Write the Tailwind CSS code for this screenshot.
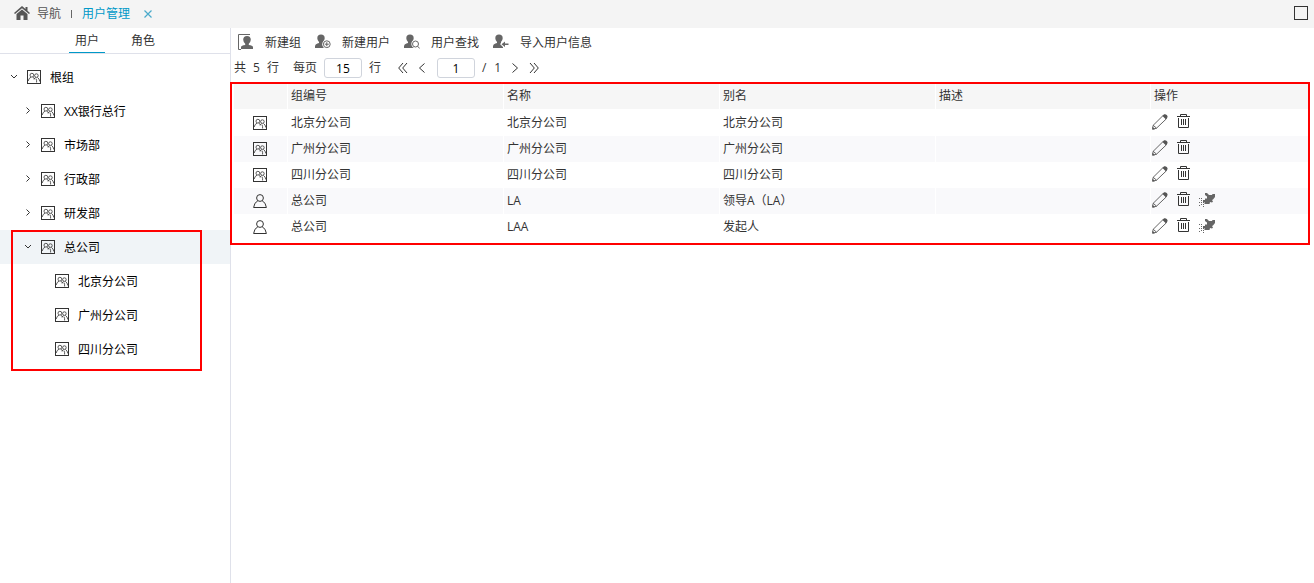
<!doctype html>
<html lang="zh-CN">

<head>
    <meta charset="UTF-8">
    <meta name="viewport" content="width=device-width, initial-scale=1.0">
    <title>用户管理</title>
    <script src="https://cdn.jsdelivr.net/npm/@tailwindcss/browser@4"></script>
</head>

<body class="flex min-h-screen flex-col bg-white font-['Open_Sans','Noto_Sans_CJK_SC',sans-serif] text-xs text-[#333]">

    <!-- Shared icons -->
    <svg class="hidden" xmlns="http://www.w3.org/2000/svg">
        <symbol id="group" viewBox="0 0 14 14">
            <rect x="0.5" y="0.5" width="13" height="13" fill="none" stroke="currentColor" />
            <g fill="none" stroke="currentColor" stroke-width="0.8">
                <circle cx="4.9" cy="5.2" r="1.9" />
                <circle cx="9.4" cy="5.6" r="1.8" />
                <path d="M1.2 11Q1.8 8 4 7.2M5.8 7.2Q7.2 7.8 7.6 9.2M7 9.4L8.4 7.4M10.4 7.4Q12.4 8.6 12.8 11.5M9 8.6Q9.8 10 9.6 12.5" />
            </g>
        </symbol>
        <symbol id="person" viewBox="0 0 14 14">
            <g fill="none" stroke="currentColor">
                <circle cx="7" cy="4" r="3.4" />
                <path d="M4.8 6.8Q1.2 8.5 0.6 13.5H13.4Q12.8 8.5 9.2 6.8" />
            </g>
        </symbol>
        <symbol id="down" viewBox="0 0 8 8">
            <path d="M1 2L4 5L7 2" fill="none" stroke="currentColor" />
        </symbol>
        <symbol id="right" viewBox="0 0 8 8">
            <path d="M2.5 0.5L5.5 3.5L2.5 6.5" fill="none" stroke="currentColor" />
        </symbol>
        <symbol id="bust" viewBox="0 0 16 16">
            <path d="M6 0.5A3.7 3.7 0 0 1 9.7 4.2Q9.6 6.6 8 8V9.2Q9.5 9.5 10 10V14H0V12Q0.2 10 2.4 9.5L4 9V8Q2.4 6.6 2.3 4.2A3.7 3.7 0 0 1 6 0.5Z" fill="currentColor" />
        </symbol>
        <symbol id="pencil" viewBox="0 0 16 16">
            <path d="M1 11.5L11.2 1.4L14.6 4.6L4.4 14.3L0.8 15ZM1.2 11.3L4.6 14.2" fill="none" stroke="currentColor" stroke-width="0.9" />
            <path d="M10.5 2L12.2 0.3Q13.8 0 15 1.2Q16 2.6 15.4 3.6L13.8 5.3ZM0.4 12.8L3 15.2L0.3 15.7Z" fill="currentColor" />
        </symbol>
        <symbol id="trash" viewBox="0 0 13 15">
            <path d="M0 2.5H13M3.5 2.5V0.5H9.5V2.5M1.5 4V13.5H11.5V4M4.5 5V11M6.5 5V11M8.5 5V11" fill="none" stroke="currentColor" />
        </symbol>
        <symbol id="rocket" viewBox="0 0 16 14">
            <path d="M6 0H8L10 2H13L13.5 1H16V4L14 6.5L13 7L14 8.5L13 9.5L11 9L10.5 11H5.5V9H4V7H6V5.5H8V3.5L6 2Z" fill="currentColor" />
            <path d="M0 5.5H3M2 7.5H4M0 9.5H5M2 11.5H5M0 12.5H1M4 13.5H5" fill="none" stroke="currentColor" stroke-dasharray="1 1" />
        </symbol>
    </svg>

    <!-- Top bar -->
    <header class="flex h-7 items-center bg-[#f4f4f4] pr-1.5 pl-3.5 text-[#555]">
        <a href="#" class="flex items-center gap-[7px]">
            <svg class="mb-0.5 h-4 w-4" viewBox="0 0 16 16" fill="currentColor" aria-hidden="true">
                <path d="M8 1L0 8L1 9L8 3.2L15 9L16 8L13.5 5.8V2H11.5V4Z" />
                <path d="M8 4.4L2.5 9V15H6.5V10.5H9.5V15H13.5V9Z" />
            </svg>
            导航
        </a>
        <span class="ml-2.5 h-2 w-px bg-[#666]"></span>
        <a href="#" class="ml-2.5 text-[#0099c8]">用户管理</a>
        <button type="button" aria-label="关闭" class="ml-3.5 text-[#4aaacb]">
            <svg class="h-2 w-2" viewBox="0 0 8 8" fill="none" stroke="currentColor" stroke-width="1.2">
                <path d="M0.5 0.5L7.5 7.5M7.5 0.5L0.5 7.5" />
            </svg>
        </button>
        <button type="button" aria-label="最大化" class="mb-0.5 ml-auto h-3.5 w-3.5 border border-[#333]"></button>
    </header>

    <div class="flex flex-1">
        <!-- Sidebar -->
        <aside class="w-[231px] shrink-0 border-r border-[#dfe1ea]">
            <div class="flex h-[26px] gap-3.5 border-b border-[#dfe1ea] pl-[69px]">
                <button type="button" class="h-[25px] border-b border-[#0099c8] px-1.5 pt-0.5">用户</button>
                <button type="button" class="h-[25px] border-b border-transparent px-3 pt-0.5">角色</button>
            </div>

            <ul class="pt-1.5 text-black">
                <li>
                    <div class="flex h-[34px] items-center gap-[9px] pl-2.5">
                        <svg class="h-2 w-2 text-[#333]"><use href="#down" /></svg>
                        <svg class="h-3.5 w-3.5 text-[#333]"><use href="#group" /></svg>
                        <span class="pt-0.5">根组</span>
                    </div>
                    <ul>
                        <li class="flex h-[34px] items-center gap-[9px] pl-6">
                            <svg class="h-2 w-2 text-[#333]"><use href="#right" /></svg>
                            <svg class="h-3.5 w-3.5 text-[#333]"><use href="#group" /></svg>
                            <span class="pt-0.5">XX银行总行</span>
                        </li>
                        <li class="flex h-[34px] items-center gap-[9px] pl-6">
                            <svg class="h-2 w-2 text-[#333]"><use href="#right" /></svg>
                            <svg class="h-3.5 w-3.5 text-[#333]"><use href="#group" /></svg>
                            <span class="pt-0.5">市场部</span>
                        </li>
                        <li class="flex h-[34px] items-center gap-[9px] pl-6">
                            <svg class="h-2 w-2 text-[#333]"><use href="#right" /></svg>
                            <svg class="h-3.5 w-3.5 text-[#333]"><use href="#group" /></svg>
                            <span class="pt-0.5">行政部</span>
                        </li>
                        <li class="flex h-[34px] items-center gap-[9px] pl-6">
                            <svg class="h-2 w-2 text-[#333]"><use href="#right" /></svg>
                            <svg class="h-3.5 w-3.5 text-[#333]"><use href="#group" /></svg>
                            <span class="pt-0.5">研发部</span>
                        </li>
                        <li class="relative">
                            <div class="flex h-[34px] items-center gap-[9px] bg-[#f0f4f7] pl-6">
                                <svg class="h-2 w-2 text-[#333]"><use href="#down" /></svg>
                                <svg class="h-3.5 w-3.5 text-[#333]"><use href="#group" /></svg>
                                <span class="pt-0.5">总公司</span>
                            </div>
                            <ul>
                                <li class="flex h-[34px] items-center gap-[9px] pl-[55px]">
                                    <svg class="h-3.5 w-3.5 text-[#333]"><use href="#group" /></svg>
                                    <span class="pt-0.5">北京分公司</span>
                                </li>
                                <li class="flex h-[34px] items-center gap-[9px] pl-[55px]">
                                    <svg class="h-3.5 w-3.5 text-[#333]"><use href="#group" /></svg>
                                    <span class="pt-0.5">广州分公司</span>
                                </li>
                                <li class="flex h-[34px] items-center gap-[9px] pl-[55px]">
                                    <svg class="h-3.5 w-3.5 text-[#333]"><use href="#group" /></svg>
                                    <span class="pt-0.5">四川分公司</span>
                                </li>
                            </ul>
                            <!-- Highlight frame -->
                            <div class="pointer-events-none absolute top-0 right-7 -bottom-[5px] left-[11px] border-2 border-[#f00]"></div>
                        </li>
                    </ul>
                </li>
            </ul>
        </aside>

        <main class="min-w-0 flex-1">
            <!-- Toolbar -->
            <div class="flex h-7 items-center gap-3.5 pl-[7px]">
                <button type="button" class="flex items-center gap-[11px]">
                    <svg class="h-4 w-4 text-[#666]" viewBox="0 0 16 16" aria-hidden="true">
                        <path d="M12 0.5H0.5V15.5H3" fill="none" stroke="currentColor" />
                        <path d="M9 2A3.8 3.8 0 0 1 12.8 5.8Q12.6 8.4 10.8 9.8V11Q14.6 11.6 15 13V15H3V13Q3.4 11.6 7.2 11V9.8Q5.4 8.4 5.2 5.8A3.8 3.8 0 0 1 9 2Z" fill="currentColor" />
                    </svg>
                    <span class="pt-0.5">新建组</span>
                </button>
                <button type="button" class="flex items-center gap-[11px]">
                    <svg class="h-4 w-4 text-[#666]" viewBox="0 0 16 16" aria-hidden="true">
                        <use href="#bust" />
                        <circle cx="11.8" cy="10.2" r="4.6" fill="white" />
                        <g fill="none" stroke="currentColor">
                            <circle cx="11.8" cy="10.2" r="3.4" />
                            <path d="M9.8 10.2H13.8M11.8 8.2V12.2" />
                        </g>
                    </svg>
                    <span class="pt-0.5">新建用户</span>
                </button>
                <button type="button" class="flex items-center gap-[11px]">
                    <svg class="h-4 w-4 text-[#666]" viewBox="0 0 16 16" aria-hidden="true">
                        <use href="#bust" />
                        <circle cx="11.5" cy="10" r="4.2" fill="white" />
                        <g fill="none" stroke="currentColor">
                            <circle cx="11.5" cy="10" r="3" />
                            <path d="M13.6 12.2L15.7 14.5" />
                        </g>
                    </svg>
                    <span class="pt-0.5">用户查找</span>
                </button>
                <button type="button" class="flex items-center gap-[11px]">
                    <svg class="h-4 w-4 text-[#666]" viewBox="0 0 16 16" aria-hidden="true">
                        <use href="#bust" />
                        <path d="M7 10L11.5 6V8.5H16V12H11.5V14.5Z" fill="white" />
                        <path d="M8.5 10.3L12 7.5V9.5H15.5V11H12V13Z" fill="currentColor" />
                    </svg>
                    <span class="pt-0.5">导入用户信息</span>
                </button>
            </div>

            <!-- Pager -->
            <div class="flex h-6 items-center pl-[3px]">
                <span class="flex gap-[7px]"><span>共</span><span>5</span><span>行</span></span>
                <label for="size" class="ml-3.5">每页</label>
                <input id="size" type="text" value="15" class="mx-[7px] h-5 w-[38px] rounded-[3px] border border-[#d0d4dc] text-center text-black">
                <span>行</span>
                <button type="button" aria-label="首页" class="ml-[17px]">
                    <svg class="h-2.5 w-2.5" viewBox="0 0 10 10" fill="none" stroke="#333"><path d="M5 0L0.7 5L5 10M9 0L4.7 5L9 10" /></svg>
                </button>
                <button type="button" aria-label="上一页" class="ml-2.5">
                    <svg class="h-2.5 w-2" viewBox="0 0 8 10" fill="none" stroke="#333"><path d="M6.5 0.5L1.5 5L6.5 9.5" /></svg>
                </button>
                <input type="text" value="1" aria-label="页码" class="mr-[7px] ml-[11px] h-5 w-[38px] rounded-[3px] border border-[#d0d4dc] text-center text-black">
                <span class="flex gap-2"><span>/</span><span>1</span></span>
                <button type="button" aria-label="下一页" class="ml-2.5">
                    <svg class="h-2.5 w-2" viewBox="0 0 8 10" fill="none" stroke="#333"><path d="M1.5 0.5L6.5 5L1.5 9.5" /></svg>
                </button>
                <button type="button" aria-label="末页" class="ml-2.5">
                    <svg class="h-2.5 w-2.5" viewBox="0 0 10 10" fill="none" stroke="#333"><path d="M1 0L5.3 5L1 10M5 0L9.3 5L5 10" /></svg>
                </button>
            </div>

            <!-- User table -->
            <div class="mt-0.5 mr-1 -ml-px border-2 border-[#f00] pb-[3px] pl-0.5">
                <table class="w-full table-fixed border-separate border-spacing-0 text-left">
                    <colgroup>
                        <col class="w-[54px]">
                        <col class="w-[216px]">
                        <col class="w-[216px]">
                        <col class="w-[216px]">
                        <col class="w-[215px]">
                        <col>
                    </colgroup>
                    <thead>
                        <tr class="h-[26px] bg-[#f6f6f6]">
                            <th class="border-r border-b border-white"></th>
                            <th class="border-r border-b border-white pb-px pl-[3px] font-normal">组编号</th>
                            <th class="border-r border-b border-white pb-px pl-[3px] font-normal">名称</th>
                            <th class="border-r border-b border-white pb-px pl-[3px] font-normal">别名</th>
                            <th class="border-r border-b border-white pb-px pl-[3px] font-normal">描述</th>
                            <th class="border-b border-white pb-px pl-[3px] font-normal">操作</th>
                        </tr>
                    </thead>
                    <tbody>
                        <tr class="h-[26px] even:bg-[#f9f9fb]">
                            <td class="border-r border-white pl-[19px]"><svg class="h-3.5 w-3.5"><use href="#group" /></svg></td>
                            <td class="border-r border-white pl-[3px]">北京分公司</td>
                            <td class="border-r border-white pl-[3px]">北京分公司</td>
                            <td class="border-r border-white pl-[3px]">北京分公司</td>
                            <td class="border-r border-white"></td>
                            <td>
                                <div class="flex items-center gap-[9px] pb-[3px] pl-px">
                                    <button type="button" aria-label="编辑"><svg class="h-4 w-4 text-[#555]"><use href="#pencil" /></svg></button>
                                    <button type="button" aria-label="删除"><svg class="h-[15px] w-[13px]"><use href="#trash" /></svg></button>
                                </div>
                            </td>
                        </tr>
                        <tr class="h-[26px] even:bg-[#f9f9fb]">
                            <td class="border-r border-white pl-[19px]"><svg class="h-3.5 w-3.5"><use href="#group" /></svg></td>
                            <td class="border-r border-white pl-[3px]">广州分公司</td>
                            <td class="border-r border-white pl-[3px]">广州分公司</td>
                            <td class="border-r border-white pl-[3px]">广州分公司</td>
                            <td class="border-r border-white"></td>
                            <td>
                                <div class="flex items-center gap-[9px] pb-[3px] pl-px">
                                    <button type="button" aria-label="编辑"><svg class="h-4 w-4 text-[#555]"><use href="#pencil" /></svg></button>
                                    <button type="button" aria-label="删除"><svg class="h-[15px] w-[13px]"><use href="#trash" /></svg></button>
                                </div>
                            </td>
                        </tr>
                        <tr class="h-[26px] even:bg-[#f9f9fb]">
                            <td class="border-r border-white pl-[19px]"><svg class="h-3.5 w-3.5"><use href="#group" /></svg></td>
                            <td class="border-r border-white pl-[3px]">四川分公司</td>
                            <td class="border-r border-white pl-[3px]">四川分公司</td>
                            <td class="border-r border-white pl-[3px]">四川分公司</td>
                            <td class="border-r border-white"></td>
                            <td>
                                <div class="flex items-center gap-[9px] pb-[3px] pl-px">
                                    <button type="button" aria-label="编辑"><svg class="h-4 w-4 text-[#555]"><use href="#pencil" /></svg></button>
                                    <button type="button" aria-label="删除"><svg class="h-[15px] w-[13px]"><use href="#trash" /></svg></button>
                                </div>
                            </td>
                        </tr>
                        <tr class="h-[26px] even:bg-[#f9f9fb]">
                            <td class="border-r border-white pl-[19px]"><svg class="h-3.5 w-3.5"><use href="#person" /></svg></td>
                            <td class="border-r border-white pl-[3px]">总公司</td>
                            <td class="border-r border-white pl-[3px]">LA</td>
                            <td class="border-r border-white pl-[3px]">领导A（LA）</td>
                            <td class="border-r border-white"></td>
                            <td>
                                <div class="flex items-center gap-[9px] pb-[3px] pl-px">
                                    <button type="button" aria-label="编辑"><svg class="h-4 w-4 text-[#555]"><use href="#pencil" /></svg></button>
                                    <button type="button" aria-label="删除"><svg class="h-[15px] w-[13px]"><use href="#trash" /></svg></button>
                                    <button type="button" aria-label="移动"><svg class="h-3.5 w-4 text-[#666]"><use href="#rocket" /></svg></button>
                                </div>
                            </td>
                        </tr>
                        <tr class="h-[26px] even:bg-[#f9f9fb]">
                            <td class="border-r border-white pl-[19px]"><svg class="h-3.5 w-3.5"><use href="#person" /></svg></td>
                            <td class="border-r border-white pl-[3px]">总公司</td>
                            <td class="border-r border-white pl-[3px]">LAA</td>
                            <td class="border-r border-white pl-[3px]">发起人</td>
                            <td class="border-r border-white"></td>
                            <td>
                                <div class="flex items-center gap-[9px] pb-[3px] pl-px">
                                    <button type="button" aria-label="编辑"><svg class="h-4 w-4 text-[#555]"><use href="#pencil" /></svg></button>
                                    <button type="button" aria-label="删除"><svg class="h-[15px] w-[13px]"><use href="#trash" /></svg></button>
                                    <button type="button" aria-label="移动"><svg class="h-3.5 w-4 text-[#666]"><use href="#rocket" /></svg></button>
                                </div>
                            </td>
                        </tr>
                    </tbody>
                </table>
            </div>
        </main>
    </div>
</body>

</html>
